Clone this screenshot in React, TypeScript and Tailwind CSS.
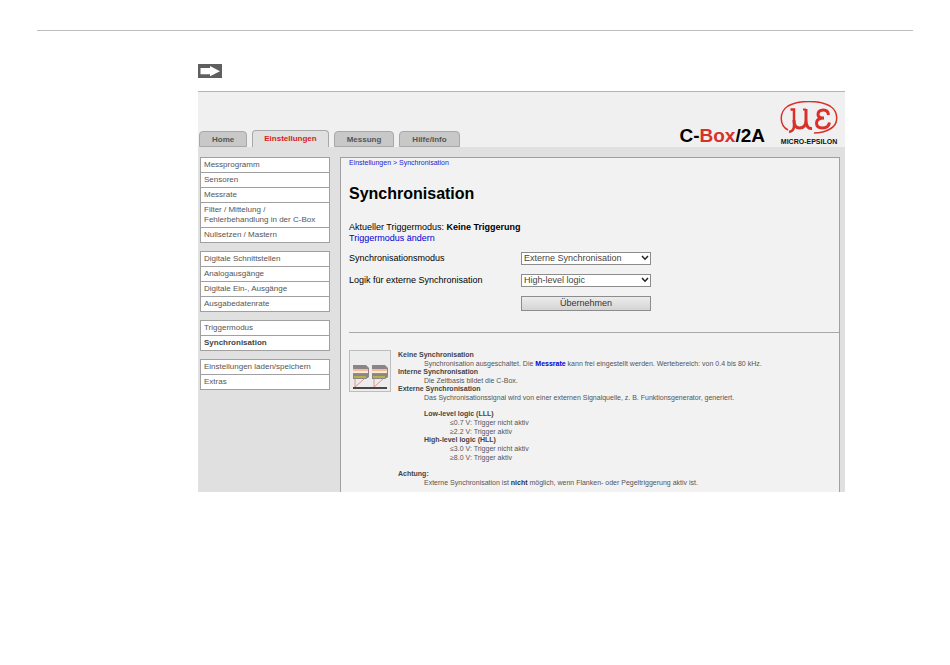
import { useState } from "react";

interface NavItem {
  label: string;
  active?: boolean;
}

const tabs: NavItem[] = [
  { label: "Home" },
  { label: "Einstellungen", active: true },
  { label: "Messung" },
  { label: "Hilfe/Info" },
];

const navGroups: NavItem[][] = [
  [
    { label: "Messprogramm" },
    { label: "Sensoren" },
    { label: "Messrate" },
    { label: "Filter / Mittelung / Fehlerbehandlung in der C-Box" },
    { label: "Nullsetzen / Mastern" },
  ],
  [
    { label: "Digitale Schnittstellen" },
    { label: "Analogausgänge" },
    { label: "Digitale Ein-, Ausgänge" },
    { label: "Ausgabedatenrate" },
  ],
  [{ label: "Triggermodus" }, { label: "Synchronisation", active: true }],
  [{ label: "Einstellungen laden/speichern" }, { label: "Extras" }],
];

function ArrowIcon() {
  return (
    <svg viewBox="0 0 24 14" className="h-[14px] w-6" aria-hidden="true">
      <rect width="24" height="14" fill="#5f5f5f" />
      <path d="M2.5 4H12V2L22 7.2L12 12.2V10.2H2.5Z" fill="#fff" />
    </svg>
  );
}

function Logo() {
  return (
    <svg viewBox="0 0 58 46" className="h-[46px] w-[58px]" role="img" aria-label="Micro-Epsilon">
      <g fill="none" stroke="#d9302a">
        <path
          d="M8 29C-1 24 -1 11 8 5C19 -1 39 -1 50 5C59 11 59 23 50 28C45 31 40 32 34 32"
          strokeWidth="1.5"
        />
        <path d="M10.5 8.5H14V25Q14 30 9 31" strokeWidth="2.5" />
        <path d="M14 19Q14 27 19.500 27Q26 27 26 19V8M26 19Q26 28 32 27.500" strokeWidth="3" />
        <path d="M23 8.500H26" strokeWidth="2" />
        <path
          d="M48.500 14Q48 9 43.500 9Q38 9 38 13.500Q38 17 44 17Q36.500 17 36.500 22Q36.500 27 42.500 27Q48.500 27 49.500 21.500"
          strokeWidth="3"
        />
      </g>
      <text
        x="29"
        y="43"
        textAnchor="middle"
        className="fill-[#111] font-['Liberation_Sans',Arial,sans-serif] text-[7px] font-bold"
      >
        MICRO-EPSILON
      </text>
    </svg>
  );
}

function SensorPicture() {
  return (
    <svg viewBox="0 0 42 42" className="size-[42px] shrink-0" aria-hidden="true">
      <rect x="0.5" y="0.5" width="41" height="41" fill="#ececec" stroke="#bdbdbd" />
      {[4, 23].map((x) => (
        <g key={x} transform={`translate(${x} 14)`}>
          <path d="M0 1H13L16 4V13L13 15H0Z" fill="#8b8587" />
          <path d="M0 5H15V7H0Z" fill="#f3bd9b" />
          <path d="M0 7H15V9H0Z" fill="#fbe9d8" />
          <path d="M0 9H15V10H0Z" fill="#cf7770" />
          <path d="M1 12H13V14H1Z" fill="#b5b343" />
          <path d="M2 15V23L11 15" fill="none" stroke="#e3928a" />
        </g>
      ))}
      <rect x="4" y="37" width="34" height="2" fill="#4a4648" />
    </svg>
  );
}

interface SelectFieldProps {
  id: string;
  label: string;
  options: string[];
}

function SelectField({ id, label, options }: SelectFieldProps) {
  const [value, setValue] = useState(options[0]);

  return (
    <div className="flex items-center">
      <label htmlFor={id} className="w-[172px] leading-[13px]">
        {label}
      </label>
      <div className="relative w-[130px]">
        <select
          id={id}
          value={value}
          onChange={(e) => setValue(e.target.value)}
          className="block h-[13px] w-full appearance-none border border-[#8c8c8c] bg-white pl-[2px] leading-[11px] text-[#444]"
        >
          {options.map((option) => (
            <option key={option}>{option}</option>
          ))}
        </select>
        <svg
          viewBox="0 0 8 6"
          className="pointer-events-none absolute top-[3px] right-[2px] h-[6px] w-2"
          aria-hidden="true"
        >
          <path d="M1 1L4 4.2L7 1" fill="none" stroke="#222" strokeWidth="1.5" />
        </svg>
      </div>
    </div>
  );
}

function Header() {
  return (
    <header className="flex h-14 items-end justify-between border-t border-[#b4b4b4] bg-[#f0f0f0] pr-[7px] pl-px">
      <nav className="flex items-end gap-[5px] text-[8px] font-bold">
        {tabs.map((tab) => (
          <a
            key={tab.label}
            href="#"
            className={
              tab.active
                ? "h-[17px] rounded-t-[4px] border border-b-0 border-[#a8a8a8] bg-[#e0e0e0] px-[11px] leading-4 text-[#d9201c]"
                : "h-4 rounded-t-[4px] border border-[#a8a8a8] bg-[#c8c8c8] px-3 leading-[15px] text-[#555]"
            }
          >
            {tab.label}
          </a>
        ))}
      </nav>
      <div className="flex items-end gap-[15px]">
        <span className="text-[19px] leading-[22px] font-bold text-black">
          C-<span className="text-[#d9302a]">Box</span>/2A
        </span>
        <Logo />
      </div>
    </header>
  );
}

function Sidebar() {
  return (
    <nav className="flex w-[130px] shrink-0 flex-col gap-2 text-[8px] text-[#555]">
      {navGroups.map((group) => (
        <ul key={group[0].label} className="divide-y divide-[#a0a0a0] border border-[#a0a0a0] bg-white">
          {group.map((item) => (
            <li key={item.label} className="px-[3px] py-[2px] leading-[10px]">
              <a href="#" className={item.active ? "block font-bold text-[#444]" : "block"}>
                {item.label}
              </a>
            </li>
          ))}
        </ul>
      ))}
    </nav>
  );
}

function HelpText() {
  return (
    <dl className="pt-px text-[7px] leading-[9px] text-[#555] [&_dd]:ml-[26px] [&_dt]:leading-[8px] [&_dt]:font-bold [&_dt]:text-[#444]">
      <dt>Keine Synchronisation</dt>
      <dd>
        Synchronisation ausgeschaltet. Die{" "}
        <a href="#" className="font-bold text-[#0000d8]">
          Messrate
        </a>{" "}
        kann frei eingestellt werden. Wertebereich: von 0.4 bis 80 kHz.
      </dd>
      <dt>Interne Synchronisation</dt>
      <dd>Die Zeitbasis bildet die C-Box.</dd>
      <dt>Externe Synchronisation</dt>
      <dd>
        Das Sychronisationssignal wird von einer externen Signalquelle, z. B. Funktionsgenerator, generiert.
        <dl className="py-2">
          <dt>Low-level logic (LLL)</dt>
          <dd>≤0.7 V: Trigger nicht aktiv</dd>
          <dd>≥2.2 V: Trigger aktiv</dd>
          <dt>High-level logic (HLL)</dt>
          <dd>≤3.0 V: Trigger nicht aktiv</dd>
          <dd>≥8.0 V: Trigger aktiv</dd>
        </dl>
      </dd>
      <dt>Achtung:</dt>
      <dd>
        Externe Synchronisation ist <b className="text-[#333]">nicht</b> möglich, wenn Flanken- oder
        Pegeltriggerung aktiv ist.
      </dd>
    </dl>
  );
}

export default function App() {
  return (
    <div className="bg-white px-[37px] pt-[30px] font-['Liberation_Sans',Arial,sans-serif]">
      <hr className="border-[#bdbdbd]" />

      <div className="mr-[68px] ml-[161px] pt-[33px]">
        <ArrowIcon />

        <div className="mt-[13px] bg-[#e0e0e0]">
          <Header />

          <div className="flex gap-[10px] pt-[10px] pr-[5px] pl-[2px]">
            <Sidebar />

            <main className="min-w-0 grow border border-b-0 border-[#a0a0a0] bg-[#f2f2f2] pb-[5px] pl-2 text-[9px] text-black">
              <nav className="text-[7px] leading-[10px] text-[#2222d0]">
                <a href="#">Einstellungen</a> &gt; <a href="#">Synchronisation</a>
              </nav>

              <h1 className="mt-4 text-[16px] leading-5 font-bold">Synchronisation</h1>

              <p className="mt-[18px] leading-[11px]">
                Aktueller Triggermodus: <b>Keine Triggerung</b>
                <br />
                <a href="#" className="text-[#0000d8]">
                  Triggermodus ändern
                </a>
              </p>

              <form className="mt-2 flex flex-col gap-[9px]" onSubmit={(e) => e.preventDefault()}>
                <SelectField
                  id="sync-mode"
                  label="Synchronisationsmodus"
                  options={["Externe Synchronisation", "Interne Synchronisation", "Keine Synchronisation"]}
                />
                <SelectField
                  id="sync-logic"
                  label="Logik für externe Synchronisation"
                  options={["High-level logic", "Low-level logic"]}
                />
                <button
                  type="submit"
                  className="ml-[172px] h-[15px] w-[130px] border border-[#8c8c8c] bg-linear-to-b from-[#ececec] to-[#d4d4d4] leading-[13px] text-[#333]"
                >
                  Übernehmen
                </button>
              </form>

              <hr className="mt-[21px] border-[#a8a8a8]" />

              <div className="mt-[17px] flex gap-[7px]">
                <SensorPicture />
                <HelpText />
              </div>
            </main>
          </div>
        </div>
      </div>
    </div>
  );
}
